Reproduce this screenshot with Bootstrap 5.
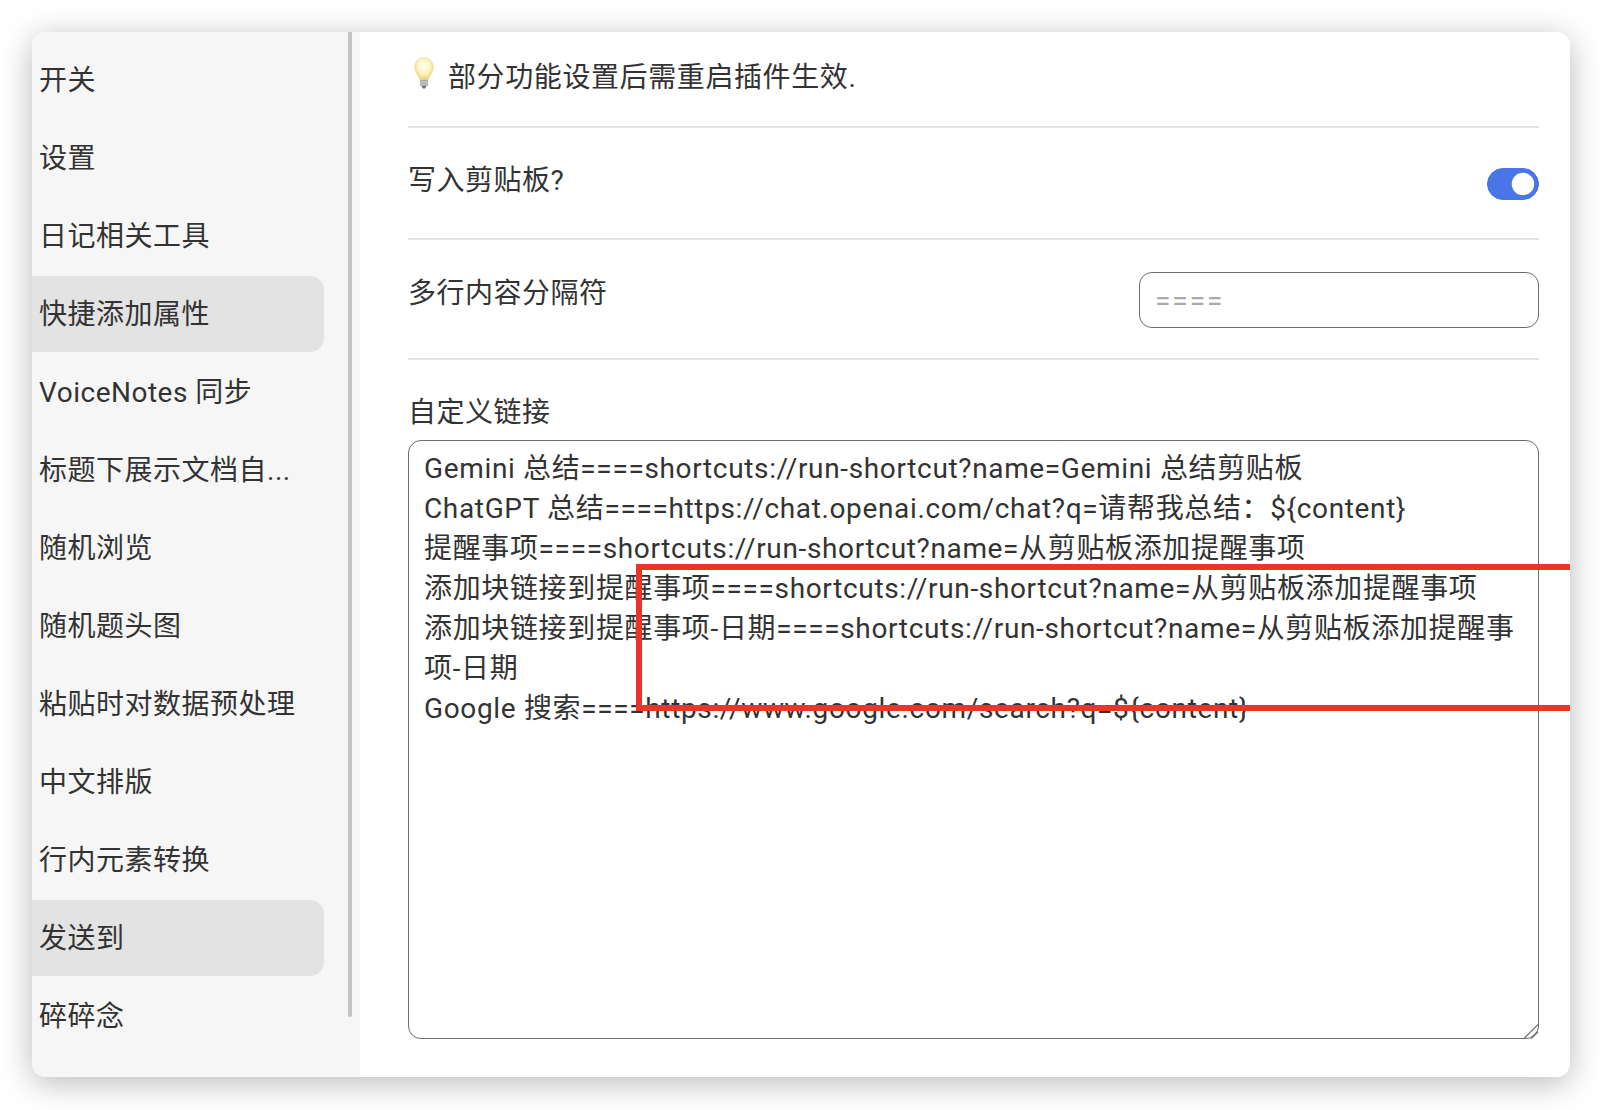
<!DOCTYPE html>
<html lang="zh-CN">
<head>
<meta charset="utf-8">
<title>设置</title>
<link href="https://cdn.jsdelivr.net/npm/bootstrap@5.3.0/dist/css/bootstrap.min.css" rel="stylesheet">
<style>
html,body{height:100%;overflow:hidden;background:#fff}
body{padding:32px;font-family:Roboto,"Noto Sans CJK SC",sans-serif;color:#333;font-size:28px;letter-spacing:.5px}
.win-wrap{width:1538px;height:1045px;border-radius:14px;box-shadow:0 6px 32px rgba(0,0,0,.28)}
.app-win{width:1538px;height:1045px;border-radius:14px;overflow:hidden;position:relative;background:#fff}
.side-pane{width:328px;flex:none;background:#f6f6f6;padding-top:10px;position:relative}
.side-item{width:292px;height:76px;margin-bottom:2px;padding:2px 0 0 7px;border-radius:0 14px 14px 0;display:flex;align-items:center;line-height:1;white-space:nowrap}
.side-item.is-on{background:#e3e3e3}
.side-bar{position:absolute;left:316px;top:0;width:4px;height:985px;background:#c4c4c4;border-radius:0 0 2px 2px}
.main-pane{flex:1;padding:0 31px 0 48px;min-width:0}
.hint-row{height:96px;padding-top:26px;border-bottom:2px solid #e2e2e2;line-height:40px;padding-left:5px;letter-spacing:.6px}
.set-row{border-bottom:2px solid #e2e2e2}
.set-label{line-height:40px}
.row-switch{height:112px;padding-top:32px}
.row-switch .set-label{margin-top:1px}
.row-input{height:120px;padding-top:32px}
.row-input .set-label{margin-top:2px}
.form-switch .form-check-input.sw-big{width:52px;height:32px;margin:8px 0 0;background-color:#4a75e6;border-color:#4a75e6;float:none}
.field-in{width:400px;height:56px;margin-top:0;border:1.5px solid #6a6c70;border-radius:13px;font-size:28px;padding:0 15px;color:#333;font-family:inherit;letter-spacing:2px}
.field-in::placeholder{color:#aaa;opacity:1}
.area-box{position:relative;margin-top:7px}
.field-area{display:block;width:100%;height:599px;border:1.5px solid #6a6c70;border-radius:13px;font-size:28px;line-height:40px;padding:8px 15px 0;color:#333;font-family:inherit;letter-spacing:.65px;resize:none;overflow:hidden}
.field-area:focus{border-color:#6a6c70;box-shadow:none}
.grip{position:absolute;right:0;bottom:0;width:16px;height:16px}
.block-label{margin-top:33px;line-height:40px}
.red-frame{position:absolute;left:604px;top:532px;width:960px;height:147px;border:6px solid #ea3528}
.bulb{width:22px;height:33px;margin-right:13px;margin-top:-1px;flex:none}
</style>
</head>
<body>
<div class="win-wrap">
<div class="app-win d-flex">
  <nav class="side-pane">
    <div class="side-item">开关</div>
    <div class="side-item">设置</div>
    <div class="side-item">日记相关工具</div>
    <div class="side-item is-on">快捷添加属性</div>
    <div class="side-item">VoiceNotes 同步</div>
    <div class="side-item">标题下展示文档自...</div>
    <div class="side-item">随机浏览</div>
    <div class="side-item">随机题头图</div>
    <div class="side-item">粘贴时对数据预处理</div>
    <div class="side-item">中文排版</div>
    <div class="side-item">行内元素转换</div>
    <div class="side-item is-on">发送到</div>
    <div class="side-item">碎碎念</div>
    <div class="side-bar"></div>
  </nav>
  <main class="main-pane">
    <div class="hint-row d-flex align-items-start">
      <svg class="bulb" viewBox="0 0 24 34" preserveAspectRatio="none" aria-hidden="true">
        <defs><radialGradient id="bg" cx="50%" cy="38%" r="55%"><stop offset="0" stop-color="#fffef2"/><stop offset=".65" stop-color="#fdf3bd"/><stop offset="1" stop-color="#f0d98a"/></radialGradient></defs>
        <path d="M12 1C6 1 2 5.400 2 10.500c0 5.500 4.500 8.500 5.500 13h9c1-4.500 5.500-7.500 5.500-13C22 5.400 18 1 12 1z" fill="url(#bg)" stroke="#ecd588" stroke-width=".8"/>
        <rect x="7.500" y="23.500" width="9" height="6.500" rx="1.500" fill="#a9a9a9"/>
        <path d="M7.500 25.500h9M7.500 27.800h9" stroke="#dcdcdc" stroke-width=".8"/>
        <path d="M9.500 30h5l-1 2.500h-3z" fill="#6f6f6f"/>
      </svg>
      <span>部分功能设置后需重启插件生效.</span>
    </div>
    <div class="set-row row-switch d-flex justify-content-between align-items-start">
      <div class="set-label">写入剪贴板?</div>
      <div class="form-check form-switch p-0 m-0"><input class="form-check-input sw-big" type="checkbox" role="switch" checked></div>
    </div>
    <div class="set-row row-input d-flex justify-content-between align-items-start">
      <div class="set-label">多行内容分隔符</div>
      <input class="form-control field-in" placeholder="====">
    </div>
    <div class="block-label">自定义链接</div>
    <div class="area-box">
    <textarea class="form-control field-area" spellcheck="false">Gemini 总结====shortcuts://run-shortcut?name=Gemini 总结剪贴板
ChatGPT 总结====https://chat.openai.com/chat?q=请帮我总结：${content}
提醒事项====shortcuts://run-shortcut?name=从剪贴板添加提醒事项
添加块链接到提醒事项====shortcuts://run-shortcut?name=从剪贴板添加提醒事项
添加块链接到提醒事项-日期====shortcuts://run-shortcut?name=从剪贴板添加提醒事项-日期
Google 搜索====https://www.google.com/search?q=${content}</textarea>
    <svg class="grip" viewBox="0 0 16 16" aria-hidden="true"><path d="M1 15.500 15 1.500" stroke="#77797c" stroke-width="1.300"/><path d="M8 15.500 15 8.500" stroke="#77797c" stroke-width="1.800"/></svg>
    </div>
  </main>
  <div class="red-frame"></div>
</div>
</div>
<script src="https://cdn.jsdelivr.net/npm/bootstrap@5.3.0/dist/js/bootstrap.bundle.min.js"></script>
</body>
</html>
